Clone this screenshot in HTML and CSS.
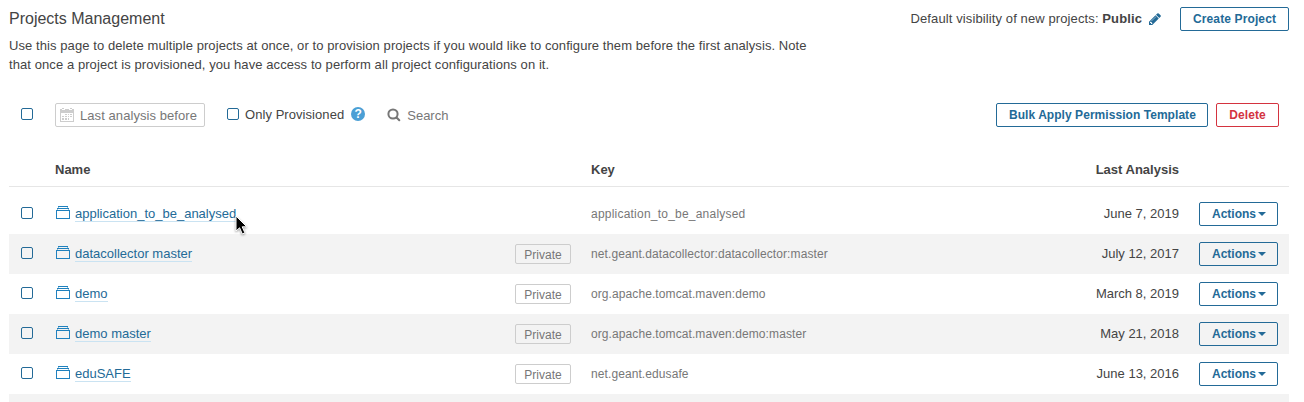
FILE: index.html
```
<!DOCTYPE html>
<html lang="en">
<head>
    <meta charset="UTF-8">
    <meta name="viewport" content="width=device-width, initial-scale=1.0">
    <title>Projects Management</title>
    <link rel="stylesheet" href="styles.css">
</head>
<body>
    <svg class="symbols" xmlns="http://www.w3.org/2000/svg">
        <symbol id="icon-project" viewBox="0 0 16 16">
            <path d="M14.985 13.988L1 14.005 1.02 5h13.966v8.988h-.001zM1.998 5.995l.006 7.02L14.022 13 14 6.004l-12.002-.009zM3 4.5V4h9.996l.004.5h1l-.005-1.497-11.98.003L2 4.5h1zm1-2v-.504h8.002L12 2.5h.997l-.003-1.51-9.988.005L3 2.5h1z"/>
        </symbol>
    </svg>

    <div class="page">
        <header class="page-header">
            <div class="page-intro">
                <h1>Projects Management</h1>
                <p>Use this page to delete multiple projects at once, or to provision projects if you would like to configure them before the first analysis. Note that once a project is provisioned, you have access to perform all project configurations on it.</p>
            </div>
            <div class="page-actions">
                <span class="visibility">Default visibility of new projects: <strong>Public</strong></span>
                <svg class="icon-edit" viewBox="0 0 1536 1536"><path d="M363 1408l91-91-235-235-91 91v107h128v128h107zM886 480q0-22-22-22-10 0-17 7l-542 542q-7 7-7 17 0 22 22 22 10 0 17-7l542-542q7-7 7-17zM832 288l416 416-832 832h-416v-416zM1515 384q0 53-37 90l-166 166-416-416 166-165q36-38 90-38 53 0 91 38l235 234q37 39 37 91z"/></svg>
                <button class="button button-create">Create Project</button>
            </div>
        </header>

        <div class="toolbar">
            <span class="checkbox"></span>
            <div class="date-input">
                <svg class="icon-calendar" viewBox="0 0 14 14">
                    <path d="M0 1h2v1h3V1h4v1h3V1h2v4H0z"/>
                    <path d="M2 0h2v1H2zM10 0h2v1h-2z"/>
                    <path d="M0 4h1v10H0zM13 4h1v10h-1zM0 13h14v1H0z"/>
                    <path d="M5 6h2v1H5zM8 6h1v1H8zM10 6h2v1h-2zM2 8h2v1H2zM5 8h2v1H5zM8 8h1v1H8zM10 8h2v1h-2zM2 10h2v2H2zM5 10h2v2H5zM8 10h1v2H8z"/>
                </svg>
                <span>Last analysis before</span>
            </div>
            <span class="checkbox"></span>
            <span class="provisioned">Only Provisioned</span>
            <span class="help">?</span>
            <svg class="icon-search" viewBox="0 0 14 14"><circle cx="6" cy="6" r="4.6"/><path d="M9.5 9.5l2.8 2.8"/></svg>
            <span class="search">Search</span>
            <div class="toolbar-buttons">
                <button class="button button-bulk">Bulk Apply Permission Template</button>
                <button class="button button-red">Delete</button>
            </div>
        </div>

        <table class="projects">
            <colgroup>
                <col class="col-check">
                <col class="col-name">
                <col class="col-visibility">
                <col class="col-key">
                <col class="col-date">
                <col class="col-actions">
            </colgroup>
            <thead>
                <tr>
                    <th></th>
                    <th>Name</th>
                    <th></th>
                    <th>Key</th>
                    <th class="date">Last Analysis</th>
                    <th></th>
                </tr>
            </thead>
            <tbody>
                <tr class="spacer"><td colspan="6"></td></tr>
                <tr>
                    <td class="check"><span class="checkbox"></span></td>
                    <td><div class="name"><svg class="icon-project"><use href="#icon-project"/></svg><a href="#">application_to_be_analysed</a><svg class="cursor" viewBox="0 0 13 21"><path d="M1 1v15l3.6-3.2 2.7 6.2 2.6-1.2-2.7-6h4.6z"/></svg></div></td>
                    <td></td>
                    <td class="key key-wide">application_to_be_analysed</td>
                    <td class="date">June 7, 2019</td>
                    <td><button class="button actions">Actions<i class="caret"></i></button></td>
                </tr>
                <tr class="odd">
                    <td class="check"><span class="checkbox"></span></td>
                    <td><div class="name"><svg class="icon-project"><use href="#icon-project"/></svg><a href="#">datacollector master</a></div></td>
                    <td><span class="badge">Private</span></td>
                    <td class="key">net.geant.datacollector:datacollector:master</td>
                    <td class="date">July 12, 2017</td>
                    <td><button class="button actions">Actions<i class="caret"></i></button></td>
                </tr>
                <tr>
                    <td class="check"><span class="checkbox"></span></td>
                    <td><div class="name"><svg class="icon-project"><use href="#icon-project"/></svg><a href="#">demo</a></div></td>
                    <td><span class="badge">Private</span></td>
                    <td class="key">org.apache.tomcat.maven:demo</td>
                    <td class="date">March 8, 2019</td>
                    <td><button class="button actions">Actions<i class="caret"></i></button></td>
                </tr>
                <tr class="odd">
                    <td class="check"><span class="checkbox"></span></td>
                    <td><div class="name"><svg class="icon-project"><use href="#icon-project"/></svg><a href="#">demo master</a></div></td>
                    <td><span class="badge">Private</span></td>
                    <td class="key">org.apache.tomcat.maven:demo:master</td>
                    <td class="date">May 21, 2018</td>
                    <td><button class="button actions">Actions<i class="caret"></i></button></td>
                </tr>
                <tr>
                    <td class="check"><span class="checkbox"></span></td>
                    <td><div class="name"><svg class="icon-project"><use href="#icon-project"/></svg><a href="#">eduSAFE</a></div></td>
                    <td><span class="badge">Private</span></td>
                    <td class="key">net.geant.edusafe</td>
                    <td class="date">June 13, 2016</td>
                    <td><button class="button actions">Actions<i class="caret"></i></button></td>
                </tr>
                <tr class="odd spacer"><td colspan="6"></td></tr>
            </tbody>
        </table>
    </div>
</body>
</html>
```
FILE: styles.css
```
* {
    box-sizing: border-box;
}
body {
    margin: 0;
    background-color: #fff;
    color: #444;
    font-family: "Liberation Sans", Arial, sans-serif;
    font-size: 13px;
}
.symbols {
    display: none;
}
.page {
    width: 1280px;
    margin-left: 9px;
}

/* header */
.page-header {
    display: flex;
    justify-content: space-between;
    height: 103px;
    padding-top: 7px;
}
.page-intro {
    width: 810px;
}
h1 {
    margin: 0;
    font-size: 16px;
    font-weight: normal;
    line-height: 24px;
}
.page-intro p {
    margin: 5px 0 0;
    line-height: 19px;
    letter-spacing: 0.08px;
}
.page-actions {
    display: flex;
    align-items: center;
    height: 24px;
}
.visibility {
    margin-top: -1px;
    letter-spacing: 0.11px;
}
.icon-edit {
    width: 12px;
    height: 12px;
    margin: 0 19px 0 7px;
    fill: #236a97;
}

/* buttons */
.button {
    height: 24px;
    padding: 0 12px;
    border: 1px solid #236a97;
    border-radius: 2px;
    background: transparent;
    color: #236a97;
    font-family: inherit;
    font-size: 12px;
    font-weight: bold;
    line-height: 22px;
    white-space: nowrap;
    cursor: pointer;
}
.button-create {
    width: 109px;
    letter-spacing: 0.12px;
}
.button-bulk {
    width: 212px;
    letter-spacing: 0.05px;
}
.button-red {
    width: 63px;
    border-color: #d4333f;
    color: #d4333f;
    letter-spacing: 0.1px;
}
.caret {
    display: inline-block;
    margin-left: 2px;
    border-top: 4px solid #236a97;
    border-left: 4px solid transparent;
    border-right: 4px solid transparent;
    vertical-align: 2px;
}

/* toolbar */
.toolbar {
    display: flex;
    align-items: center;
    height: 24px;
    padding: 0 10px 0 12px;
}
.checkbox {
    display: block;
    flex: none;
    width: 12px;
    height: 12px;
    border: 1px solid #236a97;
    border-radius: 2px;
}
.toolbar .checkbox {
    margin-top: -2px;
}
.date-input {
    display: flex;
    align-items: center;
    width: 150px;
    height: 24px;
    margin: 0 22px;
    padding-left: 4px;
    border: 1px solid #cdcdcd;
    border-radius: 2px;
    color: #777;
    letter-spacing: 0.07px;
    white-space: nowrap;
}
.icon-calendar {
    width: 14px;
    height: 14px;
    margin-right: 6px;
    fill: #cdcdcd;
}
.provisioned {
    margin: -2px 7px 0 6px;
    letter-spacing: 0.06px;
}
.help {
    width: 14px;
    height: 14px;
    margin: -2px 22px 0 0;
    border-radius: 50%;
    background-color: #4b9fd5;
    color: #fff;
    font-size: 12px;
    font-weight: bold;
    line-height: 14px;
    text-align: center;
}
.icon-search {
    width: 14px;
    height: 14px;
    margin-right: 6px;
    fill: none;
    stroke: #777;
    stroke-width: 2;
    stroke-linecap: round;
}
.search {
    color: #777;
}
.toolbar-buttons {
    display: flex;
    gap: 8px;
    margin-left: auto;
}

/* projects table */
.projects {
    width: 1280px;
    margin-top: 26px;
    border-collapse: separate;
    border-spacing: 0;
    table-layout: fixed;
}
.col-check { width: 36px; }
.col-name { width: 460px; }
.col-visibility { width: 76px; }
.col-key { width: 428px; }
.col-date { width: 180px; }
.col-actions { width: 100px; }
th {
    height: 34px;
    padding: 0 10px;
    border-bottom: 1px solid #e6e6e6;
    line-height: 16px;
    text-align: left;
}
td {
    height: 40px;
    padding: 0 10px;
    vertical-align: middle;
}
.odd td {
    background-color: #f3f3f3;
}
.spacer td {
    height: 7px;
    padding: 0;
}
.odd.spacer td {
    height: 8px;
}
td.check {
    padding: 0 0 2px 12px;
}
.name {
    display: flex;
    align-items: flex-start;
    position: relative;
    height: 18px;
    margin-top: -1px;
}
.icon-project {
    width: 16px;
    height: 16px;
    margin-right: 4px;
    fill: #1f81be;
}
.name a {
    height: 17px;
    border-bottom: 1px solid #cae3f2;
    color: #236a97;
    line-height: 17px;
    text-decoration: none;
}
.badge {
    display: block;
    width: 56px;
    height: 20px;
    border: 1px solid #cdcdcd;
    border-radius: 2px;
    color: #777;
    font-size: 12px;
    line-height: 20px;
    text-align: center;
}
.key {
    color: #777;
    font-size: 12px;
    letter-spacing: 0.09px;
}
.key-wide {
    letter-spacing: 0.22px;
}
.date {
    text-align: right;
}
td.date {
    padding-bottom: 2px;
}
.actions {
    display: block;
    width: 79px;
}
/* mouse pointer over the first project */
.cursor {
    position: absolute;
    left: 180px;
    top: 10px;
    width: 13px;
    height: 21px;
    fill: #000;
    stroke: #fff;
    stroke-width: 1;
    filter: drop-shadow(0 1px 1px rgba(0, 0, 0, 0.4));
}
```
